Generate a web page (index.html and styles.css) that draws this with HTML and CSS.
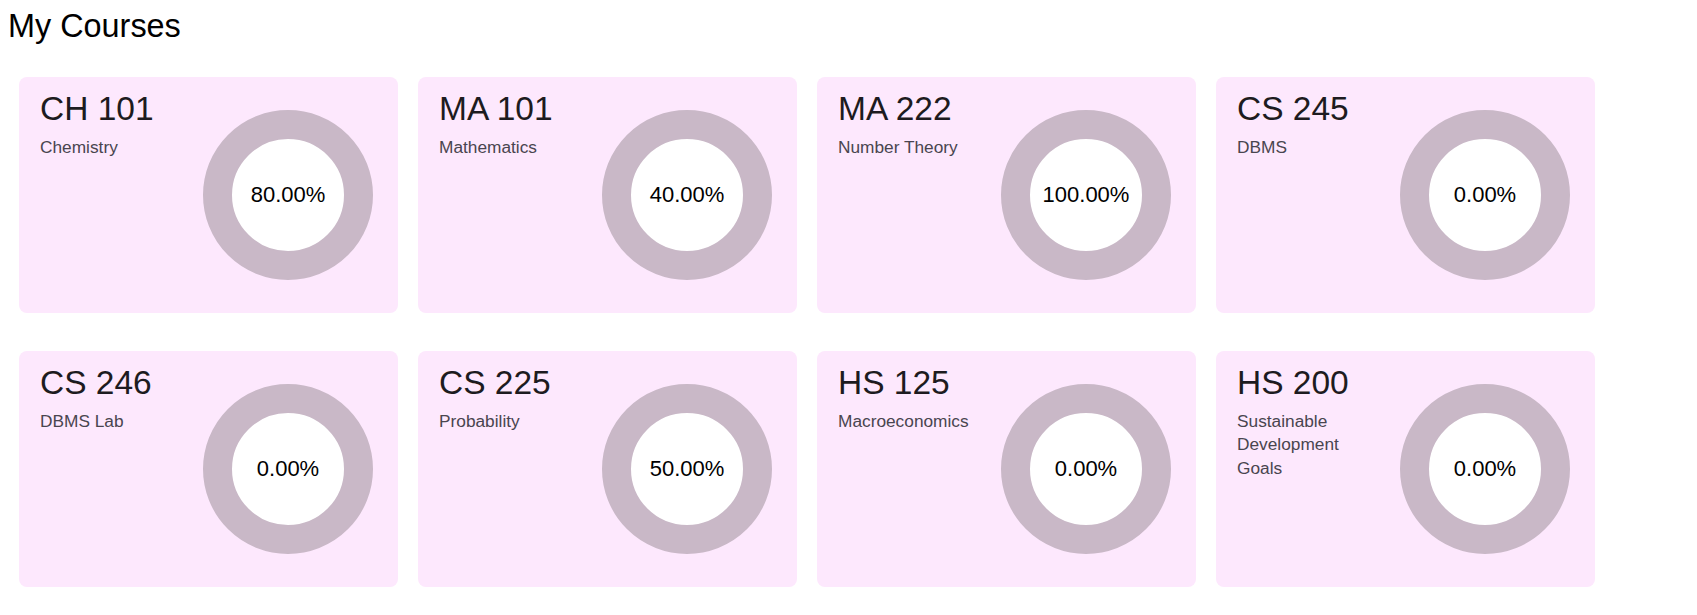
FILE: index.html
```html
<!DOCTYPE html>
<html lang="en">
<head>
<meta charset="utf-8">
<title>My Courses</title>
<link rel="stylesheet" href="styles.css">
</head>
<body>
<h1 class="page-title">My Courses</h1>
<div class="course-grid">
  <div class="course-card">
    <div class="course-info"><div class="course-code">CH 101</div><div class="course-name">Chemistry</div></div>
    <div class="donut"><span class="donut-label">80.00%</span></div>
  </div>
  <div class="course-card">
    <div class="course-info"><div class="course-code">MA 101</div><div class="course-name">Mathematics</div></div>
    <div class="donut"><span class="donut-label">40.00%</span></div>
  </div>
  <div class="course-card">
    <div class="course-info"><div class="course-code">MA 222</div><div class="course-name">Number Theory</div></div>
    <div class="donut"><span class="donut-label">100.00%</span></div>
  </div>
  <div class="course-card">
    <div class="course-info"><div class="course-code">CS 245</div><div class="course-name">DBMS</div></div>
    <div class="donut"><span class="donut-label">0.00%</span></div>
  </div>
  <div class="course-card">
    <div class="course-info"><div class="course-code">CS 246</div><div class="course-name">DBMS Lab</div></div>
    <div class="donut"><span class="donut-label">0.00%</span></div>
  </div>
  <div class="course-card">
    <div class="course-info"><div class="course-code">CS 225</div><div class="course-name">Probability</div></div>
    <div class="donut"><span class="donut-label">50.00%</span></div>
  </div>
  <div class="course-card">
    <div class="course-info"><div class="course-code">HS 125</div><div class="course-name">Macroeconomics</div></div>
    <div class="donut"><span class="donut-label">0.00%</span></div>
  </div>
  <div class="course-card">
    <div class="course-info"><div class="course-code">HS 200</div><div class="course-name">Sustainable Development Goals</div></div>
    <div class="donut"><span class="donut-label">0.00%</span></div>
  </div>
</div>
</body>
</html>
```
FILE: styles.css
```css
html, body {
  background: #ffffff;
}
body {
  margin: 8px;
  font-family: "Liberation Sans", Arial, sans-serif;
  color: #000;
}
.page-title {
  margin: 0;
  font-size: 32.4px;
  font-weight: 400;
  line-height: 37px;
  color: #000;
}
.course-grid {
  display: grid;
  grid-template-columns: repeat(4, 379px);
  column-gap: 20px;
  row-gap: 38px;
  margin-top: 32px;
  padding-left: 11px;
}
.course-card {
  box-sizing: border-box;
  height: 236px;
  display: flex;
  align-items: flex-start;
  padding: 12px 25px 12px 21px;
  background: #fde8fd;
  border-radius: 8px;
}
.course-info {
  flex: 1;
  min-width: 0;
}
.course-code {
  font-size: 33.5px;
  line-height: 39px;
  color: #1d1b20;
  margin-bottom: 8px;
}
.course-name {
  font-size: 17.3px;
  line-height: 23.3px;
  color: #49454f;
}
.donut {
  box-sizing: border-box;
  flex: none;
  width: 170px;
  height: 170px;
  margin-left: 24px;
  align-self: center;
  border-radius: 50%;
  border: 29px solid #c9b8c7;
  background: #ffffff;
  display: flex;
  align-items: center;
  justify-content: center;
}
.donut-label {
  font-size: 22px;
  color: #000;
}
```
